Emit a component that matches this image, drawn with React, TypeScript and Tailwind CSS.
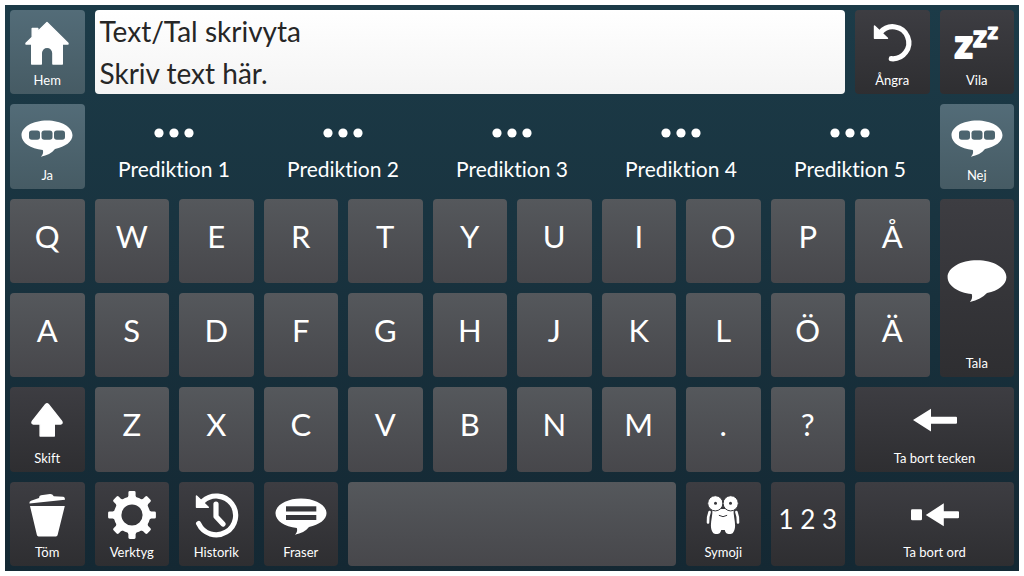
import type { ReactNode } from "react";

type Tone = "letter" | "dark" | "blue";

const tones: Record<Tone, string> = {
  letter: "from-[#55585c] to-[#47474b]",
  dark: "from-[#3d3d42] to-[#2e2e31]",
  blue: "from-[#536c78] to-[#465b64]",
};

const Icon = ({ children }: { children: ReactNode }) => (
  <svg
    viewBox="0 0 60 56"
    className="w-[60px] h-14 shrink-0"
    fill="currentColor"
    aria-hidden="true"
  >
    {children}
  </svg>
);

const HomeIcon = () => (
  <Icon>
    <path
      d="M30 7.5 51 28.2V29H45.3V49H35.9V38a5.8 5.8 0 0 0-11.6 0V49H14.7V29H9v-.8l6.2-6V13.4h5.6v3.2z"
      stroke="currentColor"
      strokeWidth="1.4"
      strokeLinejoin="round"
    />
  </Icon>
);

const bubble =
  "M30 11.6C44.1 11.6 55.5 18.2 55.5 26.3c0 6.4-7.2 11.6-17.5 13.6-3 3.8-8 6.6-14.2 7.8 2.2-2 2.8-4.3 2-6.8C13.6 39.8 4.5 33.8 4.5 26.3 4.5 18.2 15.9 11.6 30 11.6z";

const WordsIcon = () => (
  <Icon>
    <path d={bubble} />
    <g className="fill-[#4d656f]">
      <rect x="12" y="21.5" width="11" height="9.3" rx="2.8" />
      <rect x="24.5" y="21.5" width="11" height="9.3" rx="2.8" />
      <rect x="37" y="21.5" width="11" height="9.3" rx="2.8" />
    </g>
  </Icon>
);

const PhrasesIcon = () => (
  <Icon>
    <path d={bubble} />
    <g className="fill-[#37373b]">
      <rect x="15" y="19.3" width="30.3" height="5.2" />
      <rect x="15" y="28" width="30.3" height="5" />
    </g>
  </Icon>
);

const SpeakIcon = () => (
  <Icon>
    <path d="M30 9.2C46.3 9.2 59.4 16.7 59.4 26.2c0 7.3-8 13.5-19.4 15.9-4 4.3-9.600 7.300-17.200 8.800 2.200-2.200 2.900-5.100 1.900-7.900C10.700 41.500.6 34.600.6 26.200.6 16.700 13.700 9.200 30 9.200z" />
  </Icon>
);

const UndoIcon = () => (
  <Icon>
    <path
      d="M18.5 17.5A16 16 0 1 1 29.3 43.7"
      fill="none"
      stroke="currentColor"
      strokeWidth="5.2"
      strokeLinecap="round"
    />
    <path
      d="M12.5 11l13 12.2h-13z"
      stroke="currentColor"
      strokeWidth="1.4"
      strokeLinejoin="round"
    />
  </Icon>
);

const SleepIcon = () => (
  <Icon>
    <g
      className="font-['Lato',sans-serif] font-black"
      stroke="currentColor"
      strokeLinejoin="round"
    >
      <text x="7.5" y="43.4" fontSize="40" strokeWidth="2">z</text>
      <text x="26" y="32.4" fontSize="30" strokeWidth="1.5">z</text>
      <text x="40.5" y="23.6" fontSize="23" strokeWidth="1">z</text>
    </g>
  </Icon>
);

const ShiftIcon = () => (
  <Icon>
    <path
      d="M28.6 12.5q1.4-1.4 2.8 0L44.8 29.5q1 2.2-1.3 2.5H37.3V44H23.1V32H16.5q-2.3-.3-1.3-2.5z"
      stroke="currentColor"
      strokeWidth="1.4"
      strokeLinejoin="round"
    />
  </Icon>
);

const TrashIcon = () => (
  <Icon>
    <path d="M13 19h34.8l-7.2 29q-.3 1.4-1.7 1.4H21.6q-1.4 0-1.7-1.4z" />
    <path d="M12.4 16.5q-.2-2 1.6-2.7l8-2.8q.1-2.4 2-2.7l9-1.2q2.4-.2 3.8 2.2l9.6.4q1.8.3 1.6 3z" />
  </Icon>
);

const GearIcon = () => (
  <Icon>
    <circle cx="30" cy="28" r="14.4" fill="none" stroke="currentColor" strokeWidth="7.6" />
    {[0, 45, 90, 135, 180, 225, 270, 315].map((angle) => (
      <path
        key={angle}
        d="M25.2 11.5l1.200-2.800v-3.200q0-1.400 1.400-1.400h4.400q1.400 0 1.400 1.400v3.200l1.200 2.800z"
        transform={`rotate(${angle} 30 28)`}
      />
    ))}
  </Icon>
);

const HistoryIcon = () => (
  <Icon>
    <g fill="none" stroke="currentColor" strokeWidth="5.2" strokeLinecap="round" strokeLinejoin="round">
      <path d="M17 14.2A19.4 19.4 0 1 1 12.6 36.5" />
      <path d="M30 17v12.5l7 7.5" />
    </g>
    <path
      d="M10.5 9l11.8 11.2H10.5z"
      stroke="currentColor"
      strokeWidth="1.4"
      strokeLinejoin="round"
    />
  </Icon>
);

const SymojiIcon = () => (
  <Icon>
    <g fill="none" stroke="currentColor" strokeWidth="2.6" strokeLinecap="round">
      <path d="M16.6 25q-2 5-1.600 10.500" />
      <path d="M43.400 25q2 5 1.600 10.500" />
    </g>
    <path d="M19.400 22h21.200c-.4 6 1.500 11 1.500 16.500 0 3.500-.8 5.500-2.300 7.500-1.400 1.400-5.200 1.400-6.600 0-.9-.9-1.200-1.800-1.400-3h-3.600c-.2 1.200-.5 2.100-1.400 3-1.400 1.400-5.200 1.400-6.600 0-1.500-2-2.300-4-2.300-7.500 0-5.500 1.900-10.500 1.500-16.500z" />
    <g stroke="#37373b">
      <circle cx="22.300" cy="16.300" r="7.600" />
      <circle cx="37.700" cy="16.300" r="7.600" />
      <path d="M26.200 28.500q3.800 2.600 7.600 0" fill="none" strokeLinecap="round" />
    </g>
    <g className="fill-[#37373b]">
      <circle cx="22.500" cy="16.300" r="1.500" />
      <circle cx="37.500" cy="16.300" r="1.500" />
    </g>
  </Icon>
);

const DeleteCharIcon = () => (
  <Icon>
    <path d="M8 28 26 16.7V24.7H51q1 0 1 1v5q0 1-1 1H26V39.4z" />
  </Icon>
);

const DeleteWordIcon = () => (
  <Icon>
    <rect x="6" y="22.3" width="11" height="11" rx="1.2" />
    <path d="M20.800 28 38.800 16.300V24.300H53q1 0 1 1v5q0 1-1 1H38.800V39.300z" />
  </Icon>
);

type KeyProps = {
  label?: string;
  icon?: ReactNode;
  tone?: Tone;
  className?: string;
};

const ActionKey = ({ label, icon, tone = "dark", className = "" }: KeyProps) => (
  <button
    type="button"
    className={`flex flex-col items-center rounded bg-linear-to-b pt-[5px] pb-[5px] min-w-0 ${tones[tone]} ${className}`}
  >
    <span className="flex-1 flex items-center justify-center">{icon}</span>
    <span className="text-[13px] leading-[18px] whitespace-nowrap">{label}</span>
  </button>
);

const LetterKey = ({ letter }: { letter: string }) => (
  <button
    type="button"
    className={`flex items-center justify-center rounded bg-linear-to-b pb-2.5 text-[31px] leading-9 min-w-0 ${tones.letter}`}
  >
    {letter}
  </button>
);

const Prediction = ({ text }: { text: string }) => (
  <button
    type="button"
    className="col-span-2 flex flex-col items-center justify-end gap-[19px] pb-2 min-w-0"
  >
    <svg viewBox="0 0 40 10" className="w-10 h-2.5" fill="currentColor" aria-hidden="true">
      <circle cx="5" cy="5" r="4.6" />
      <circle cx="20" cy="5" r="4.6" />
      <circle cx="35" cy="5" r="4.6" />
    </svg>
    <span className="text-[21px] leading-6 whitespace-nowrap">{text}</span>
  </button>
);

const predictions = [1, 2, 3, 4, 5];
const topRow = ["Q", "W", "E", "R", "T", "Y", "U", "I", "O", "P", "Å"];
const middleRow = ["A", "S", "D", "F", "G", "H", "J", "K", "L", "Ö", "Ä"];
const bottomRow = ["Z", "X", "C", "V", "B", "N", "M", ".", "?"];

const App = () => {
  return (
    <div className="min-h-screen flex bg-white p-[5px] font-['Lato','Liberation_Sans',sans-serif] [font-variant-ligatures:none]">
      <main className="flex-1 grid grid-cols-12 auto-rows-fr gap-2.5 p-[5px] bg-linear-to-b from-[#1c3b48] to-[#142833] text-white">
        <ActionKey label="Hem" icon={<HomeIcon />} tone="blue" />
        <textarea
          aria-label="Text/Tal skrivyta"
          defaultValue={"Text/Tal skrivyta\nSkriv text här."}
          className="col-span-9 block w-full h-full resize-none overflow-hidden rounded bg-linear-to-b from-white to-[#f4f4f4] px-[5px] text-[28px] leading-[42px] text-[#262626] outline-none"
        />
        <ActionKey label="Ångra" icon={<UndoIcon />} />
        <ActionKey label="Vila" icon={<SleepIcon />} />

        <ActionKey label="Ja" icon={<WordsIcon />} tone="blue" />
        {predictions.map((n) => (
          <Prediction key={n} text={`Prediktion ${n}`} />
        ))}
        <ActionKey label="Nej" icon={<WordsIcon />} tone="blue" />

        {topRow.map((letter) => (
          <LetterKey key={letter} letter={letter} />
        ))}
        <ActionKey label="Tala" icon={<SpeakIcon />} className="row-span-2" />
        {middleRow.map((letter) => (
          <LetterKey key={letter} letter={letter} />
        ))}

        <ActionKey label="Skift" icon={<ShiftIcon />} />
        {bottomRow.map((letter) => (
          <LetterKey key={letter} letter={letter} />
        ))}
        <ActionKey label="Ta bort tecken" icon={<DeleteCharIcon />} className="col-span-2" />

        <ActionKey label="Töm" icon={<TrashIcon />} />
        <ActionKey label="Verktyg" icon={<GearIcon />} />
        <ActionKey label="Historik" icon={<HistoryIcon />} />
        <ActionKey label="Fraser" icon={<PhrasesIcon />} />
        <button
          type="button"
          aria-label="Mellanslag"
          className={`col-span-4 rounded bg-linear-to-b ${tones.letter}`}
        />
        <ActionKey label="Symoji" icon={<SymojiIcon />} />
        <button
          type="button"
          className={`flex items-center justify-center rounded bg-linear-to-b pb-2.5 text-[26px] leading-9 whitespace-nowrap ${tones.dark}`}
        >
          1 2 3
        </button>
        <ActionKey label="Ta bort ord" icon={<DeleteWordIcon />} className="col-span-2" />
      </main>
    </div>
  );
};

export default App;
